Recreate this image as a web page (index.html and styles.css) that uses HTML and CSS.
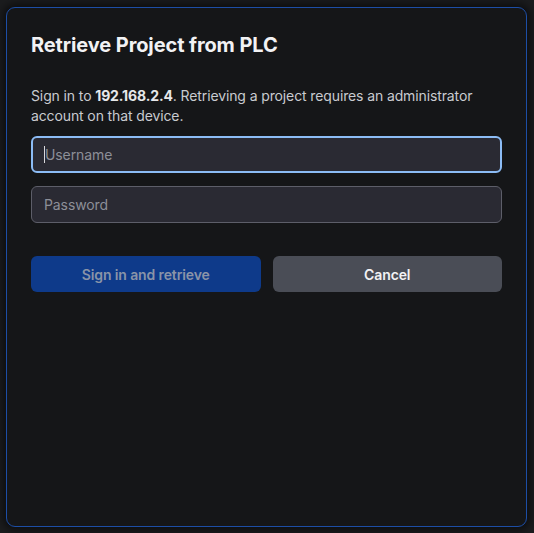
FILE: index.html
```html
<!DOCTYPE html>
<html>
<head>
<meta charset="utf-8">
<link rel="stylesheet" href="styles.css">
</head>
<body>
<div class="dialog">
  <h1 class="title">Retrieve Project from PLC</h1>
  <p class="desc">Sign in to <strong>192.168.2.4</strong>. Retrieving a project requires an administrator account on that device.</p>
  <div class="fields">
    <div class="input focused"><span class="caret"></span><span class="ph">Username</span></div>
    <div class="input"><span class="ph">Password</span></div>
  </div>
  <div class="actions">
    <button class="btn primary">Sign in and retrieve</button>
    <button class="btn secondary">Cancel</button>
  </div>
</div>
</body>
</html>
```
FILE: styles.css
```css
html, body {
  margin: 0;
  padding: 0;
  background: #1b1c1e;
  width: 534px;
  height: 533px;
  overflow: hidden;
  font-family: Inter, "Noto Sans", sans-serif;
}
body {
  padding: 7px 7px 6px 6px;
  box-sizing: border-box;
}
.dialog {
  box-sizing: border-box;
  height: 520px;
  background: #151618;
  border: 1px solid #1d4ea6;
  border-radius: 9px;
  box-shadow: 0 0 8px 3px rgba(0,0,0,0.55);
  padding: 24px 24px;
}
.title {
  margin: 0;
  font-size: 20px;
  line-height: 26px;
  font-weight: 700;
  color: #f2f2f4;
  letter-spacing: -0.1px;
}
.desc {
  margin: 28px 0 0;
  font-size: 14px;
  line-height: 20px;
  color: #c9cbd0;
  letter-spacing: -0.12px;
}
.desc strong {
  color: #e6e7ea;
  font-weight: 700;
}
.fields {
  margin-top: 10px;
  display: flex;
  flex-direction: column;
  gap: 13px;
}
.input {
  box-sizing: border-box;
  height: 37px;
  background: #2a2a33;
  border: 1px solid #5d5e69;
  border-radius: 6px;
  display: flex;
  align-items: center;
  padding-left: 12px;
  font-size: 14px;
  letter-spacing: -0.1px;
}
.input.focused {
  border: 2px solid #8cbcf5;
  padding-left: 11px;
}
.ph {
  color: #8d8f98;
}
.caret {
  width: 1px;
  height: 17px;
  background: #d8d8dc;
}
.actions {
  margin-top: 33px;
  display: flex;
  gap: 12px;
}
.btn {
  flex: 1;
  height: 36px;
  border: none;
  border-radius: 6px;
  font-family: Inter, "Noto Sans", sans-serif;
  font-size: 14px;
  font-weight: 600;
  letter-spacing: -0.12px;
}
.primary {
  background: #0e3a8a;
  color: #8a94a8;
}
.secondary {
  background: #4a4d56;
  color: #f2f2f4;
}
```
